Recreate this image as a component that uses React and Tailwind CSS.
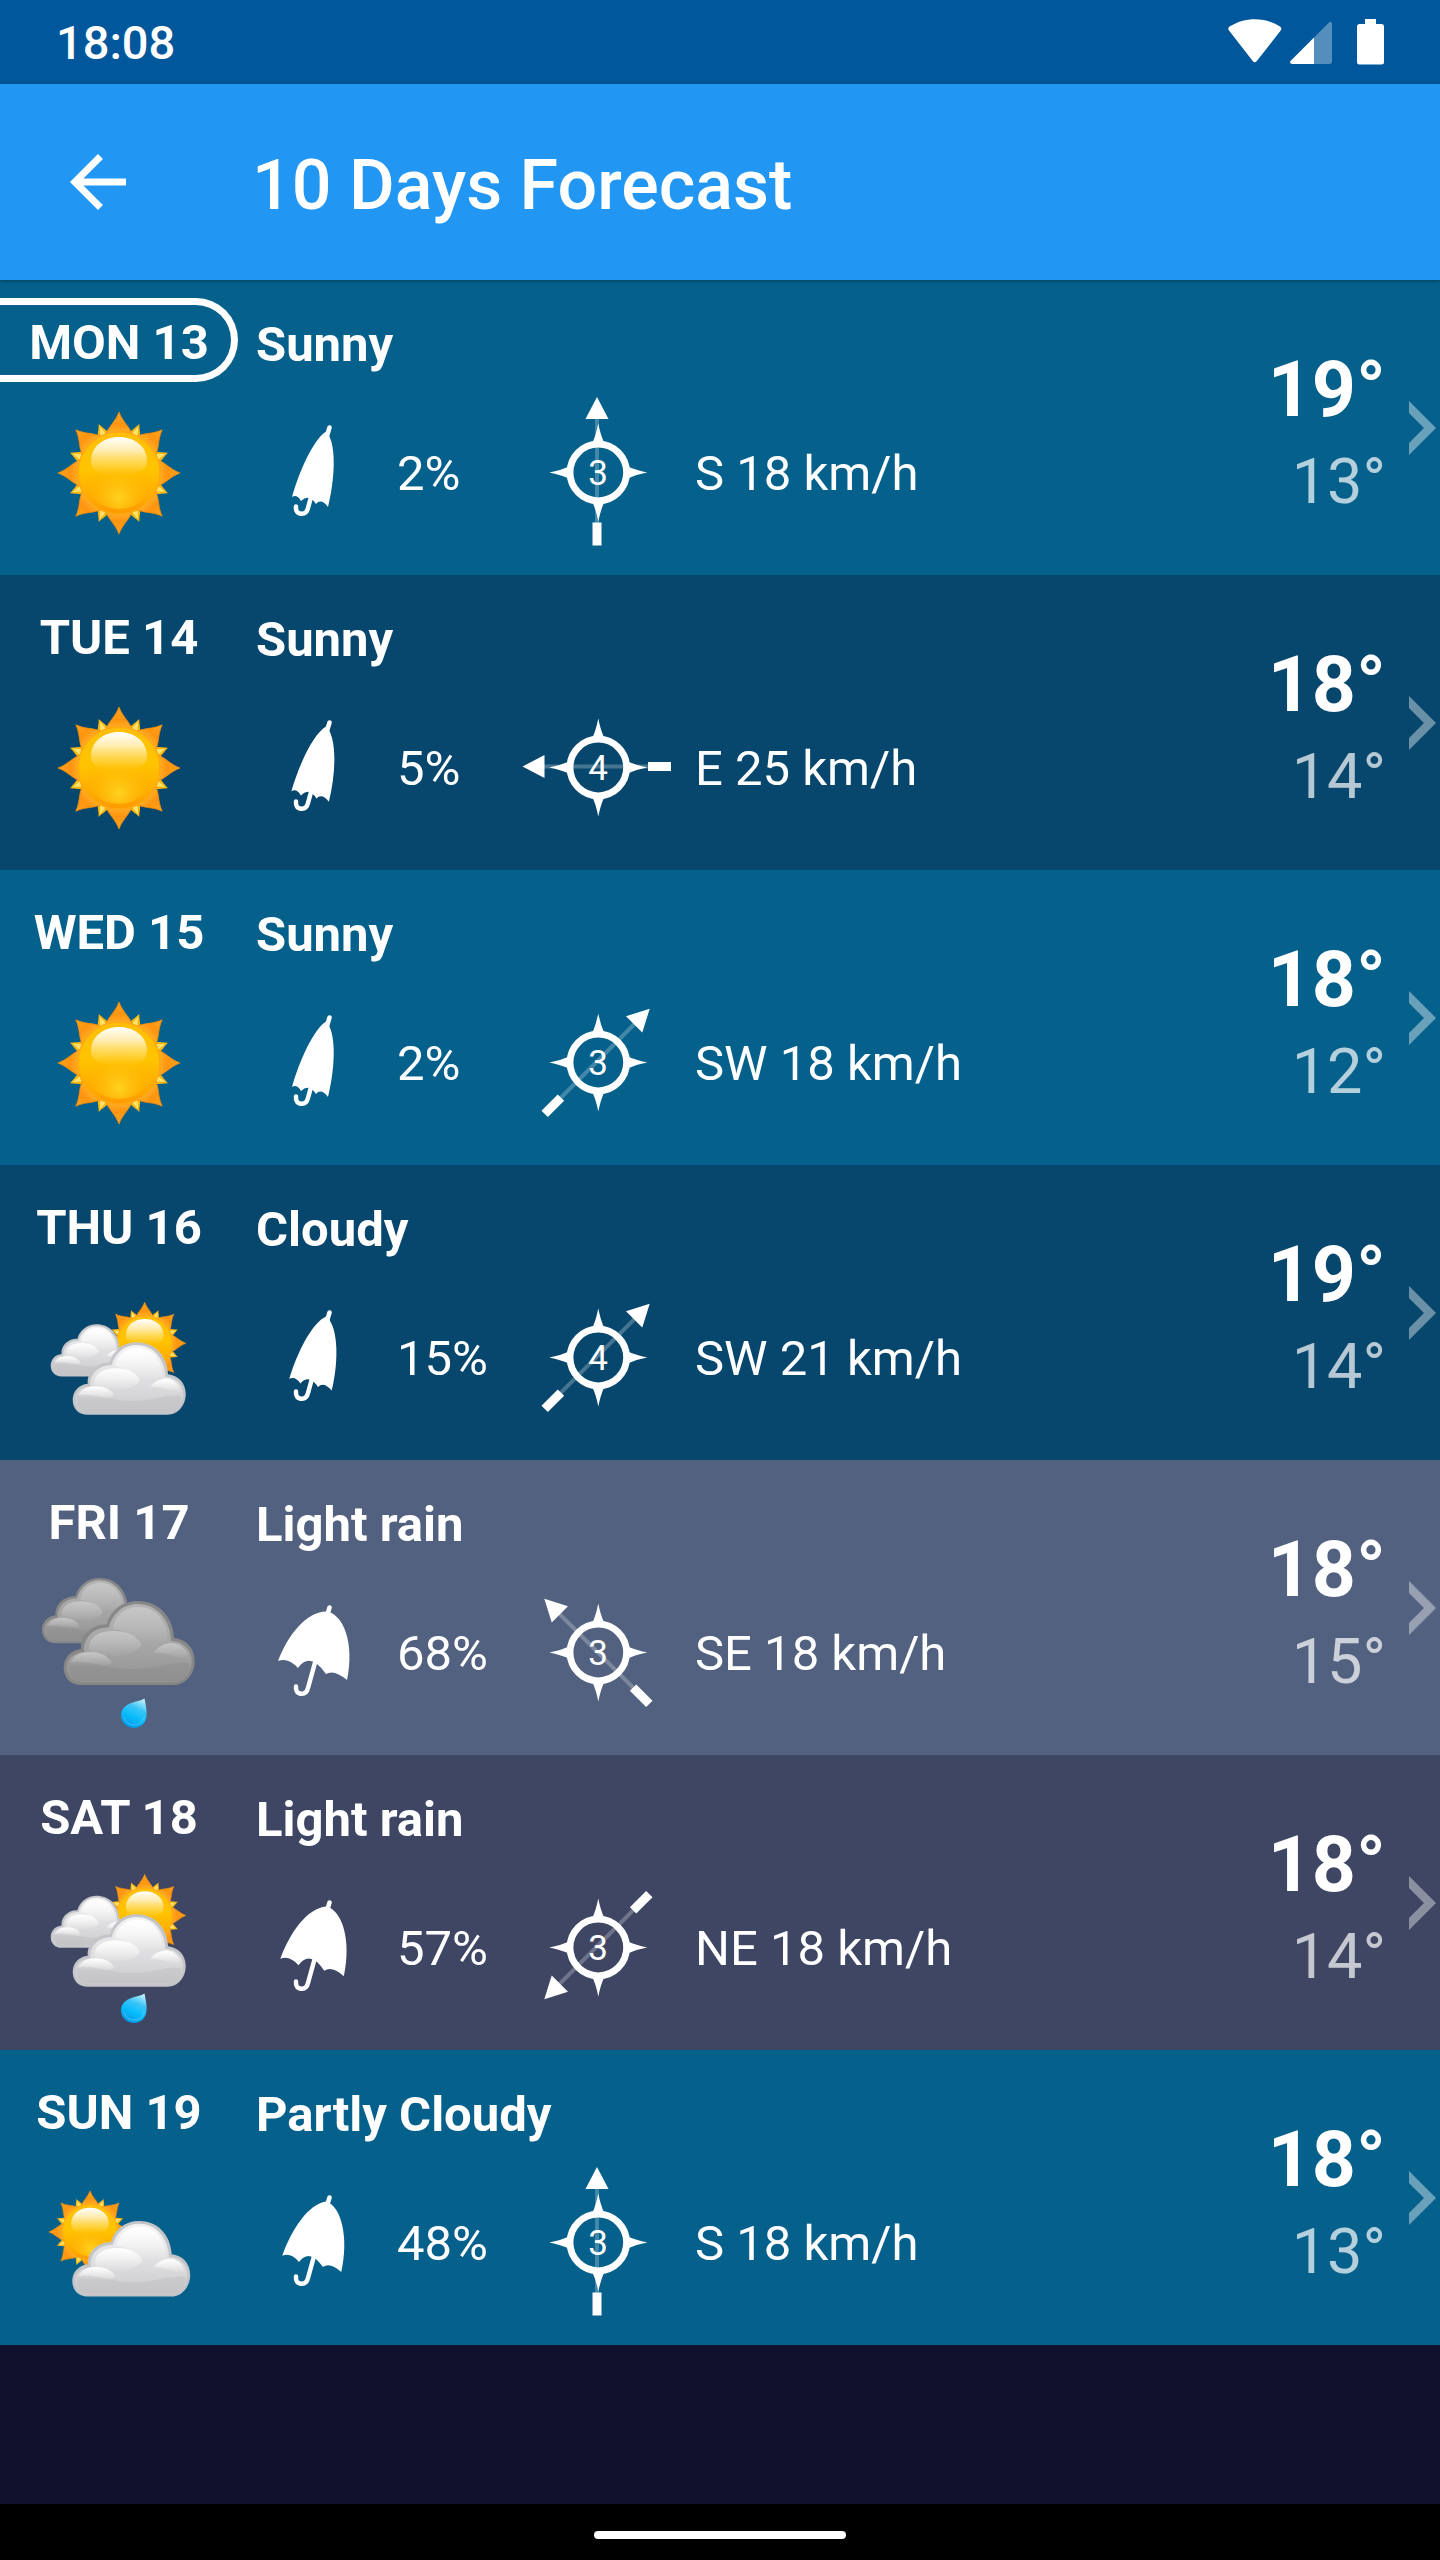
const days = [
  { id: 1, label: 'MON 13', today: true, condition: 'Sunny', icon: 'sunny', rain: 2, wind: 'S 18 km/h', force: 3, angle: 0, high: 19, low: 13, bg: 'bg-[#05618c]' },
  { id: 2, label: 'TUE 14', condition: 'Sunny', icon: 'sunny', rain: 5, wind: 'E 25 km/h', force: 4, angle: 270, high: 18, low: 14, bg: 'bg-[#08476d]' },
  { id: 3, label: 'WED 15', condition: 'Sunny', icon: 'sunny', rain: 2, wind: 'SW 18 km/h', force: 3, angle: 45, high: 18, low: 12, bg: 'bg-[#05618c]' },
  { id: 4, label: 'THU 16', condition: 'Cloudy', icon: 'cloudy', rain: 15, wind: 'SW 21 km/h', force: 4, angle: 45, high: 19, low: 14, bg: 'bg-[#08476d]' },
  { id: 5, label: 'FRI 17', condition: 'Light rain', icon: 'rain', rain: 68, wind: 'SE 18 km/h', force: 3, angle: 315, high: 18, low: 15, bg: 'bg-[#52617f]' },
  { id: 6, label: 'SAT 18', condition: 'Light rain', icon: 'sunRain', rain: 57, wind: 'NE 18 km/h', force: 3, angle: 225, high: 18, low: 14, bg: 'bg-[#3e4663]' },
  { id: 7, label: 'SUN 19', condition: 'Partly Cloudy', icon: 'partly', rain: 48, wind: 'S 18 km/h', force: 3, angle: 0, high: 18, low: 13, bg: 'bg-[#05618c]' },
];

const steps = [0, 45, 90, 135, 180, 225, 270, 315];

// Gradients shared by all the weather icons
function Gradients() {
  return (
    <svg className="absolute h-0 w-0" aria-hidden="true">
      <defs>
        <linearGradient id="ray" x1="0" y1="0" x2="0" y2="1">
          <stop offset="0" stopColor="#ffa51e" />
          <stop offset="0.5" stopColor="#ff9410" />
          <stop offset="1" stopColor="#ffb931" />
        </linearGradient>
        <linearGradient id="disc" x1="0" y1="0" x2="0" y2="1">
          <stop offset="0" stopColor="#ffbe0a" />
          <stop offset="0.45" stopColor="#ffc400" />
          <stop offset="0.8" stopColor="#ffab00" />
          <stop offset="1" stopColor="#ff9a00" />
        </linearGradient>
        <radialGradient id="glow" cx="0.5" cy="0.85" r="0.5">
          <stop offset="0" stopColor="#ffd21f" />
          <stop offset="1" stopColor="#ffb400" stopOpacity="0" />
        </radialGradient>
        <linearGradient id="sunGloss" x1="0" y1="0" x2="0" y2="1">
          <stop offset="0" stopColor="#fff" />
          <stop offset="0.35" stopColor="#fff2c4" stopOpacity="0.9" />
          <stop offset="0.75" stopColor="#ffe27a" stopOpacity="0.45" />
          <stop offset="1" stopColor="#ffd23c" stopOpacity="0" />
        </linearGradient>
        <linearGradient id="white" x1="0" y1="0" x2="0" y2="1">
          <stop offset="0" stopColor="#f3f3f4" />
          <stop offset="0.6" stopColor="#dcdcde" />
          <stop offset="1" stopColor="#cbcbcd" />
        </linearGradient>
        <linearGradient id="gray" x1="0" y1="0" x2="0" y2="1">
          <stop offset="0" stopColor="#b4b4b4" />
          <stop offset="0.6" stopColor="#a3a3a3" />
          <stop offset="1" stopColor="#949494" />
        </linearGradient>
        <linearGradient id="whiteGloss" x1="0" y1="0" x2="0" y2="1">
          <stop offset="0" stopColor="#fff" />
          <stop offset="1" stopColor="#fff" stopOpacity="0" />
        </linearGradient>
        <linearGradient id="grayGloss" x1="0" y1="0" x2="0" y2="1">
          <stop offset="0" stopColor="#c6c6c6" />
          <stop offset="1" stopColor="#c6c6c6" stopOpacity="0" />
        </linearGradient>
        <linearGradient id="drop" x1="0.8" y1="0" x2="0.4" y2="1">
          <stop offset="0" stopColor="#c4f3ff" />
          <stop offset="0.35" stopColor="#3cc4f7" />
          <stop offset="0.65" stopColor="#08bdfb" />
          <stop offset="1" stopColor="#0396e6" />
        </linearGradient>
      </defs>
    </svg>
  );
}

function Sun({ x, y, scale = 1 }) {
  return (
    <g transform={`translate(${x} ${y}) scale(${scale})`}>
      {steps.map((a) => (
        <g key={a} transform={`rotate(${a + 22.5})`}>
          <path d="M-7-38 C-5-45-2-48 0-53 C2-48 5-45 7-38Z" fill="#fbb60f" />
          <path d="M-3-40 C-2-45-1-47 0-50 C1-47 2-45 3-40Z" fill="#ffe36b" />
        </g>
      ))}
      {steps.map((a) => (
        <path
          key={a}
          transform={`rotate(${a})`}
          d="M-14-36 C-11-47-4-50 0-61 C4-50 11-47 14-36Z"
          fill="url(#ray)"
          stroke="#f08a0a"
          strokeWidth="0.8"
        />
      ))}
      <circle r="41" fill="url(#disc)" stroke="#ffa912" strokeWidth="1.5" />
      <circle r="36" fill="url(#glow)" />
      <path d="M-28-12 C-28-27-15-36 0-36 C15-36 28-27 28-12 C28-2 18 3 0 3 C-18 3-28-2-28-12Z" fill="url(#sunGloss)" />
    </g>
  );
}

function Cloud({ x, y, scale = 1, tone = 'white' }) {
  const light = tone === 'white';
  const gloss = light ? 'url(#whiteGloss)' : 'url(#grayGloss)';
  return (
    <g transform={`translate(${x} ${y}) scale(${scale})`}>
      <path
        d="M17.5 84 C7 84 0 77 0 66.5 C0 57 7 49 17.5 48 C16 36 27 23 43 23.5 C47 9 59 0 74 0 C94 0 109 14 110.5 37 C122 38 131 47 131 60 C131 73 122 84 110 84Z"
        fill={light ? '#c3c5c9' : '#878787'}
      />
      <path
        d="M18 81 C9 81 3 75 3 66.5 C3 58 10 51.500 20.500 51 C19 38 29 26 45 26.500 C49 12 60 3 74 3 C92 3 106.500 17 107.500 40 C120 40.500 128 49 128 60 C128 72 120 81 110 81Z"
        fill={light ? 'url(#white)' : 'url(#gray)'}
      />
      <path d="M49 28 C51 14 62 6 75 6 C90 6 102 17 104 36 C103 48 76 44 66 34 C61 30 55 28 49 28Z" fill={gloss} />
      <path d="M25 48 C25 36 35 30 50 30 C65 30 74 36 78 44 C70 58 30 60 25 48Z" fill={gloss} />
      <path d="M6 66 C7 56 15 51 26 51 C38 51 46 56 48 62 C38 70 14 62 6 66Z" fill={gloss} />
      <path d="M90 52 C94 45 102 42 109 42 C118 43 125 50 125 58 C115 58 102 50 90 52Z" fill={gloss} />
      <path
        d="M5 62 C20 57 45 68 68 68 C92 68 108 60 126 62 C127 72 120 80 110 80 L18 80 C9 80 3 73 5 62Z"
        fill={light ? '#b4b4b8' : '#838383'}
        opacity="0.3"
      />
    </g>
  );
}

function Drop() {
  return (
    <g>
      <path d="M109.500 129.500 C111 137 112 142 111.500 147 C111 154 105.500 159 99 159 C92 159 86 153.500 86 146.500 C86 141 89 137 95 134.500 C101 132 106 132 109.500 129.500Z" fill="url(#drop)" />
      <path d="M89 148 C90 153 94 156 99 156 C104 156 108 153 109 148" fill="none" stroke="#5ad4ff" strokeWidth="1" opacity="0.7" />
    </g>
  );
}

function WeatherIcon({ type }) {
  return (
    <svg viewBox="0 0 168 168" className="h-[168px] w-[168px]" aria-hidden="true">
      {type === 'sunny' && <Sun x={84} y={84} />}
      {type === 'cloudy' && (
        <>
          <Sun x={109.7} y={69.3} scale={0.675} />
          <Cloud x={15.7} y={50.3} scale={0.62} />
          <Cloud x={37.7} y={68.3} scale={0.863} />
        </>
      )}
      {type === 'rain' && (
        <>
          <Cloud x={7} y={9} scale={0.777} tone="gray" />
          <Cloud x={28.7} y={32} tone="gray" />
          <Drop />
        </>
      )}
      {type === 'sunRain' && (
        <>
          <Sun x={109.7} y={51.5} scale={0.675} />
          <Cloud x={15.7} y={31.7} scale={0.62} />
          <Cloud x={37.7} y={50.3} scale={0.863} />
          <Drop />
        </>
      )}
      {type === 'partly' && (
        <>
          <Sun x={55} y={73} scale={0.675} />
          <Cloud x={37.3} y={62} scale={0.9} />
        </>
      )}
    </svg>
  );
}

const closedCanopy = [36, 72, 44, 44, 58, 14, 70, 6.5, 80, 16, 80, 50, 72, 82, 65, 73, 60, 79, 53, 68, 45, 76, 41, 69, 36, 72];
const openCanopy = [22, 56, 32, 30, 50, 7, 70, 6.5, 87, 8, 99, 38, 91, 75, 78, 64, 70, 69, 54, 46, 42, 63, 32, 52, 22, 56];

// The umbrella opens up as the chance of rain grows
function Umbrella({ chance }) {
  const t = (chance - 2) / 66;
  const p = closedCanopy.map((v, i) => v + (openCanopy[i] - v) * t);
  const d = `M${p.slice(0, 2)} C${p.slice(2, 8)} C${p.slice(8, 14)} Q${p.slice(14, 18)} Q${p.slice(18, 22)} Q${p.slice(22, 26)}Z`;
  return (
    <svg viewBox="0 0 120 96" className="h-24 w-[120px]" aria-hidden="true">
      <path d={d} fill="#fff" />
      <path d="M73.500 2.500 L71 11" stroke="#fff" strokeWidth="4.500" strokeLinecap="round" />
      <path d="M60 54 L52 83 C51 87 49 88.800 46 88.800 C41.500 88.800 39.500 86 40 81.500" fill="none" stroke="#fff" strokeWidth="4.500" strokeLinecap="round" />
    </svg>
  );
}

function Compass({ force, angle }) {
  return (
    <svg viewBox="0 0 160 160" className="h-40 w-40" role="img" aria-label={`Wind force ${force}`}>
      <g transform={`rotate(${angle} 79 78.500)`} fill="#fff">
        <path d="M77 20h4v118h-4z" opacity="0.25" />
        <path d="M79 4 L90.500 26 H67.500Z" />
        <path d="M74.500 129.500h9v23h-9z" />
      </g>
      <circle cx="80.300" cy="79.500" r="28.300" fill="none" stroke="#fff" strokeWidth="6.800" />
      {[0, 90, 180, 270].map((a) => (
        <path key={a} transform={`rotate(${a} 80.300 79.500)`} d="M80.300 30.500 Q82.500 42 86.300 50 H74.300 Q78 42 80.300 30.500Z" fill="#fff" />
      ))}
      <text x="80" y="92" textAnchor="middle" fill="#fff" className="text-[35px]">{force}</text>
    </svg>
  );
}

function DayRow({ day }) {
  return (
    <li>
      <a href={`#day-${day.id}`} className={`flex ${day.bg}`}>
        <div className="flex w-[238px] shrink-0 flex-col items-center gap-[7px] py-[18px]">
          <div
            className={`h-[84px] w-full rounded-r-full border-y-[7px] border-r-[7px] pl-[7px] text-center text-[49px] leading-[76px] font-bold ${
              day.today ? 'border-white' : 'border-transparent'
            }`}
          >
            {day.label}
          </div>
          <WeatherIcon type={day.icon} />
        </div>

        <div className="min-w-0 flex-1 pt-[35px] pl-[18px] text-[49px] leading-[60px]">
          <h2 className="font-bold">{day.condition}</h2>
          <div className="mt-[14px] grid h-[168px] grid-cols-[141px_121px_177px_1fr] items-center">
            <Umbrella chance={day.rain} />
            <span className="pt-[2px]">{day.rain}%</span>
            <Compass force={day.force} angle={day.angle} />
            <span className="pt-[2px] whitespace-nowrap">{day.wind}</span>
          </div>
        </div>

        <div className="pt-16 text-right">
          <p className="text-[77px] leading-[92px] font-bold">{day.high}°</p>
          <p className="text-[63px] leading-[92px] text-white/70">{day.low}°</p>
        </div>
        <div className="flex w-[54px] shrink-0 items-center pl-[23px]">
          <svg viewBox="0 0 27 54" className="h-[54px] w-[27px]" aria-hidden="true">
            <path d="M0 0 L27 27 L0 54 V42 L15 27 L0 12Z" fill="#fff" opacity="0.4" />
          </svg>
        </div>
      </a>
    </li>
  );
}

export default function App() {
  return (
    <div className="flex min-h-screen flex-col bg-[#10112d] font-[Roboto,sans-serif] text-white">
      <Gradients />

      {/* Status bar */}
      <div className="flex h-[84px] items-center justify-between bg-[#01579b] px-14">
        <span className="pt-[2px] text-[47px] leading-[60px] font-medium">18:08</span>
        <div className="flex items-center">
          <svg viewBox="0 0 54 46" className="h-[46px] w-[54px]" aria-hidden="true">
            <path d="M1.200 11.800 C-0.200 10.200 0 8.800 1.500 7.600 C17-2.200 37-2.200 52 7.600 C53.700 8.800 53.800 10.200 52.500 11.800 L28.800 42 C27.500 43.700 26 43.700 24.700 42Z" fill="#fff" />
          </svg>
          <svg viewBox="0 0 42 46" className="ml-2 h-[46px] w-[42px]" aria-hidden="true">
            <path d="M24 18.500 L39 3.500 C40.500 2 42 3 42 4.500 V42.500 C42 44 41 45 39.500 45 H24Z" fill="#fff" opacity="0.33" />
            <path d="M24 18.500 V45 H2.500 C0 45-0.700 43 1 41.500Z" fill="#fff" />
          </svg>
          <svg viewBox="0 0 27 46" className="ml-[25px] h-[46px] w-[27px]" aria-hidden="true">
            <path d="M8 0h11v5h5.500a2.500 2.500 0 0 1 2.500 2.500v35.500a2.500 2.500 0 0 1-2.500 2.500h-22a2.500 2.500 0 0 1-2.500-2.500v-35.500a2.500 2.500 0 0 1 2.500-2.500h5.500z" fill="#fff" />
          </svg>
        </div>
      </div>

      {/* App bar */}
      <header className="relative flex h-[196px] items-center gap-28 bg-[#2196f3] px-14 shadow-[0_1px_4px_rgba(0,0,0,0.35)]">
        <button type="button" aria-label="Back" className="h-[84px] w-[84px]">
          <svg viewBox="0 0 24 24" className="h-[84px] w-[84px]">
            <path d="M20 11H7.830l5.590-5.590L12 4l-8 8 8 8 1.410-1.410L7.830 13H20v-2z" fill="#fff" />
          </svg>
        </button>
        <h1 className="pt-1.5 text-[70px] leading-[84px] font-medium">10 Days Forecast</h1>
      </header>

      <main className="flex-1">
        <ul>
          {days.map((day) => (
            <DayRow key={day.id} day={day} />
          ))}
        </ul>
      </main>

      {/* Gesture bar */}
      <div className="flex h-14 items-center justify-center bg-black pt-1.5">
        <div className="h-2 w-[252px] rounded-full bg-white" />
      </div>
    </div>
  );
}
